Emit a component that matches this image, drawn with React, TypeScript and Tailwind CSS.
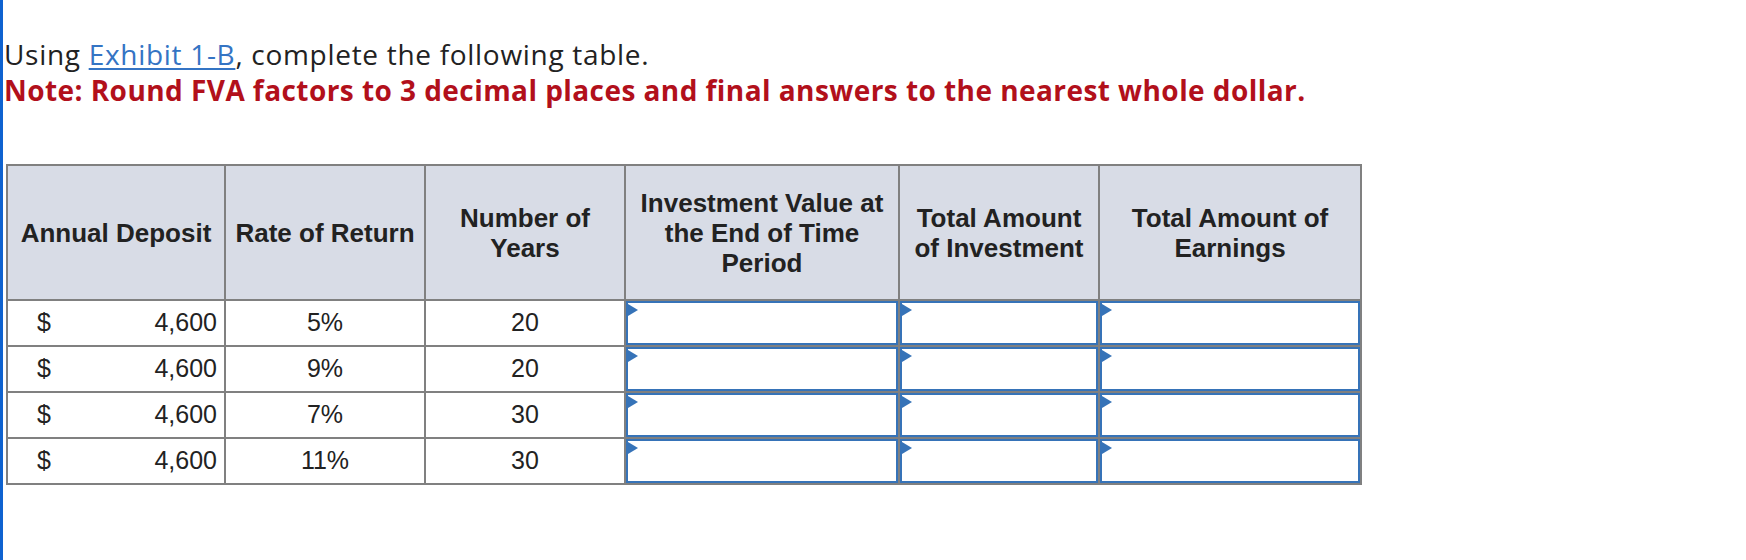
import React from "react";

const headers = [
  "Annual Deposit",
  "Rate of Return",
  "Number of Years",
  "Investment Value at the End of Time Period",
  "Total Amount of Investment",
  "Total Amount of Earnings",
];

const rows = [
  { deposit: "4,600", rate: "5%", years: "20" },
  { deposit: "4,600", rate: "9%", years: "20" },
  { deposit: "4,600", rate: "7%", years: "30" },
  { deposit: "4,600", rate: "11%", years: "30" },
];

function AnswerCell() {
  return (
    <div className="border-r-2 border-b-2 border-[#808080] bg-white">
      <div className="relative h-full border-2 border-[#3673b8]">
        {/* little flag marking an input box */}
        <svg
          className="absolute left-0 top-[1px]"
          width="10"
          height="12"
          viewBox="0 0 10 12"
        >
          <polygon points="0,0 10,6 0,12" fill="#3673b8" />
        </svg>
      </div>
    </div>
  );
}

export default function App() {
  const cell =
    "border-r-2 border-b-2 border-[#808080] flex items-center text-[25px] text-[#222]";

  return (
    <div className="min-h-[560px] w-full bg-white border-l-[3px] border-[#0e62d0]">
      <div className="pt-[36px] pl-[1px] font-['Open_Sans',sans-serif] text-[28px] leading-[36px]">
        <p className="text-[#222] tracking-[0.7px]">
          Using{" "}
          <span className="text-[#3474c4] underline underline-offset-[3px] decoration-[2px]">
            Exhibit 1-B
          </span>
          , complete the following table.
        </p>
        <p className="font-bold text-[#b2101b] tracking-[0.44px]">
          Note: Round FVA factors to 3 decimal places and final answers to the
          nearest whole dollar.
        </p>
      </div>

      <div className="mt-[56px] ml-[3px] inline-grid grid-cols-[218px_200px_200px_274px_200px_262px] border-l-2 border-t-2 border-[#808080] font-['Liberation_Sans',Arial,sans-serif]">
        {headers.map((h) => (
          <div
            key={h}
            className="h-[135px] border-r-2 border-b-2 border-[#808080] bg-[#d8dce6] flex items-center justify-center px-1 text-center text-[26px] leading-[30px] font-bold text-[#222]"
          >
            {h}
          </div>
        ))}

        {rows.map((r, i) => (
          <React.Fragment key={i}>
            <div className={`${cell} h-[46px] justify-between pl-[29px] pr-[7px]`}>
              <span>$</span>
              <span>{r.deposit}</span>
            </div>
            <div className={`${cell} h-[46px] justify-center`}>{r.rate}</div>
            <div className={`${cell} h-[46px] justify-center`}>{r.years}</div>
            <AnswerCell />
            <AnswerCell />
            <AnswerCell />
          </React.Fragment>
        ))}
      </div>
    </div>
  );
}
